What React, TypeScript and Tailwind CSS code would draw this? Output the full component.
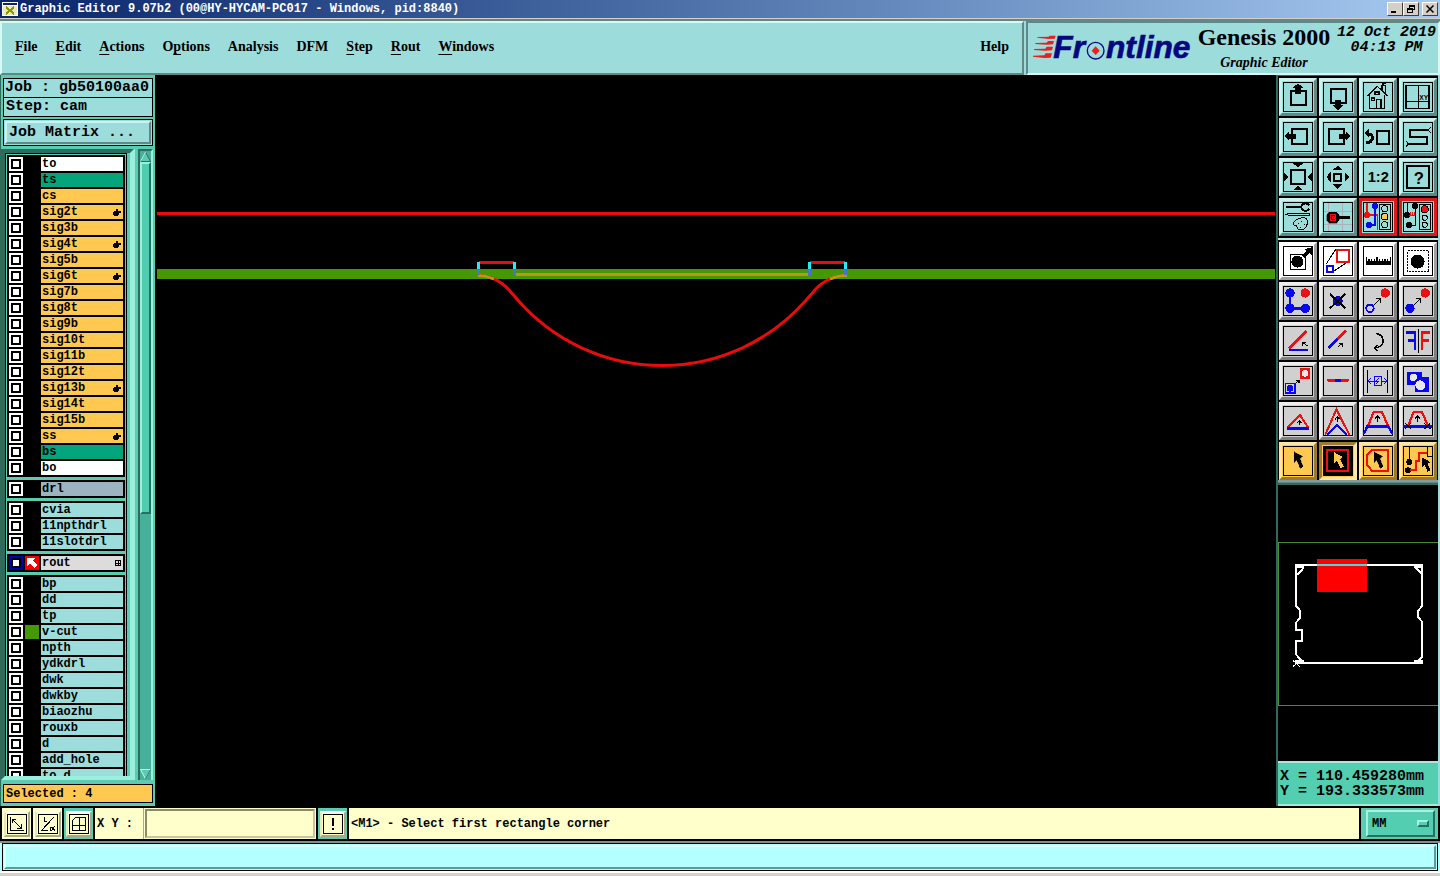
import type { ReactNode } from "react";

const MONO = "font-['Liberation_Mono',monospace] font-bold";
const SERIF = "font-['Liberation_Serif',serif] font-bold";

/* ---------- Title bar ---------- */

function WindowButton({ label, children }: { label: string; children: ReactNode }) {
  return (
    <button
      aria-label={label}
      className="flex h-[14px] w-4 items-center justify-center border border-t-white border-r-[#404040] border-b-[#404040] border-l-white bg-[#d4d0c8]"
    >
      <svg viewBox="0 0 12 10" className="h-[10px] w-3" shapeRendering="crispEdges" fill="none" stroke="#000">
        {children}
      </svg>
    </button>
  );
}

function TitleBar() {
  return (
    <div className="flex h-[18px] shrink-0 items-center bg-linear-to-r from-[#0a246a] to-[#a6caf0] pr-[2px] pl-[2px]">
      <svg viewBox="0 0 16 16" className="h-4 w-4" shapeRendering="crispEdges">
        <rect x="0" y="1" width="16" height="14" fill="#fff" />
        <rect x="1" y="2" width="14" height="2" fill="#10206a" />
        <rect x="1" y="5" width="14" height="9" fill="#ece9c0" />
        <path d="M4 6l8 7M12 6l-8 7" stroke="#8a9a00" strokeWidth="2" />
      </svg>
      <h1 className={`${MONO} ml-[2px] flex-1 text-[12px] leading-[18px] whitespace-pre text-white`}>
        Graphic Editor 9.07b2 (00@HY-HYCAM-PC017 - Windows, pid:8840)
      </h1>
      <WindowButton label="Minimize">
        <path d="M2 8h5" strokeWidth="2" />
      </WindowButton>
      <WindowButton label="Restore">
        <path d="M4 1h6M4 2h6M4.500 1v3M9.500 1v5M7 5.500h3M2 4.500h6M2 5h6M2.500 4v5M7.500 4v5M2 8.500h6" />
      </WindowButton>
      <div className="w-[3px]" />
      <WindowButton label="Close">
        <path d="M2.500 1.500l7 7M9.500 1.500l-7 7" strokeWidth="1.500" shapeRendering="auto" />
      </WindowButton>
    </div>
  );
}

/* ---------- Header ---------- */

const MENUS: [string, string, string][] = [
  ["", "F", "ile"],
  ["", "E", "dit"],
  ["", "A", "ctions"],
  ["O", "p", "tions"],
  ["Analysis", "", ""],
  ["DFM", "", ""],
  ["", "S", "tep"],
  ["", "R", "out"],
  ["", "W", "indows"],
];

function FrontlineLogo() {
  return (
    <svg viewBox="216 90 483 96" className="h-8 w-[161px] overflow-visible" role="img" aria-label="Frontline">
      <g fill="#f01c1c">
        <path d="M232 108l34-1 3-3h18l-3 9-18 1-34-4z" />
        <path d="M226 126l34-1 4-5h18l-3 10-19 1-34-2z" />
        <path d="M222 144l34-1 4-6h19l-3 11-20 1-34-2z" />
        <path d="M219 164l34-1 4-6h19l-4 13-19 1-34-4z" />
      </g>
      <g
        fill="#07077f"
        stroke="#07077f"
        strokeWidth="2"
        fontFamily="'Liberation Sans', sans-serif"
        fontSize="95"
        fontWeight="700"
        fontStyle="italic"
      >
        <text x="280" y="172">Fr</text>
        <text x="438" y="172">ntline</text>
      </g>
      <circle cx="407" cy="149" r="25" fill="none" stroke="#07077f" strokeWidth="4" />
      <path d="M407 136l12 13-12 13-12-13z" fill="#f01c1c" />
    </svg>
  );
}

function Header() {
  return (
    <header className="flex h-14 shrink-0 border-t-2 border-t-[#5f8886] bg-[#9cdcdb]">
      <nav className="flex flex-1 items-center border-2 border-t-[#d8f8f4] border-r-[#5f8886] border-b-[#5f8886] border-l-[#d8f8f4] px-[13px] pb-[2px]">
        <ul className={`${SERIF} flex gap-[18px] text-[14px] leading-5 text-black`}>
          {MENUS.map(([pre, key, post]) => (
            <li key={pre + key + post}>
              <button>
                {pre}
                <span className="underline decoration-1 underline-offset-[3px]">{key}</span>
                {post}
              </button>
            </li>
          ))}
        </ul>
        <button className={`${SERIF} ml-auto text-[14px] leading-5`}>Help</button>
      </nav>
      <div className="ml-[2px] flex w-[414px] items-start border-2 border-t-[#5f8886] border-r-[#d8f8f4] border-b-[#d8f8f4] border-l-[#5f8886] pl-1">
        <div className="pt-2">
          <FrontlineLogo />
        </div>
        <div className={`${SERIF} ml-[3px] w-[136px] text-center text-black`}>
          <div className="text-[24px] leading-7 whitespace-nowrap">Genesis 2000</div>
          <div className="text-[14px] leading-6 italic">Graphic Editor</div>
        </div>
        <div className={`${MONO} ml-[5px] pt-[2px] text-center text-[15px] leading-[15px] whitespace-nowrap text-black italic`}>
          <div>12 Oct 2019</div>
          <div>04:13 PM</div>
        </div>
      </div>
    </header>
  );
}

/* ---------- Layer list ---------- */

type Layer = { name: string; bg: string; hand?: boolean; swatch?: "green" | "active" };

const W = "bg-white";
const G = "bg-[#04a57c]";
const O = "bg-[#ffc850]";
const T = "bg-[#9cdcdb]";

const GROUPS: Layer[][] = [
  [
    { name: "to", bg: W },
    { name: "ts", bg: G },
    { name: "cs", bg: O },
    { name: "sig2t", bg: O, hand: true },
    { name: "sig3b", bg: O },
    { name: "sig4t", bg: O, hand: true },
    { name: "sig5b", bg: O },
    { name: "sig6t", bg: O, hand: true },
    { name: "sig7b", bg: O },
    { name: "sig8t", bg: O },
    { name: "sig9b", bg: O },
    { name: "sig10t", bg: O },
    { name: "sig11b", bg: O },
    { name: "sig12t", bg: O },
    { name: "sig13b", bg: O, hand: true },
    { name: "sig14t", bg: O },
    { name: "sig15b", bg: O },
    { name: "ss", bg: O, hand: true },
    { name: "bs", bg: G },
    { name: "bo", bg: W },
  ],
  [{ name: "drl", bg: "bg-[#9cb4bf]" }],
  [
    { name: "cvia", bg: T },
    { name: "11npthdrl", bg: T },
    { name: "11slotdrl", bg: T },
  ],
  [{ name: "rout", bg: "bg-[#dcdcdc]", swatch: "active" }],
  [
    { name: "bp", bg: T },
    { name: "dd", bg: T },
    { name: "tp", bg: T },
    { name: "v-cut", bg: T, swatch: "green" },
    { name: "npth", bg: T },
    { name: "ydkdrl", bg: T },
    { name: "dwk", bg: T },
    { name: "dwkby", bg: T },
    { name: "biaozhu", bg: T },
    { name: "rouxb", bg: T },
    { name: "d", bg: T },
    { name: "add_hole", bg: T },
    { name: "to_d", bg: T },
  ],
];

function LayerRow({ layer }: { layer: Layer }) {
  const active = layer.swatch === "active";
  const id = `layer-${layer.name}`;
  return (
    <li className="flex h-[14px] gap-[2px]">
      <span className={`flex h-[14px] w-[14px] items-center justify-center ${active ? "bg-[#0000b4]" : "bg-white"}`}>
        <input
          id={id}
          type="checkbox"
          defaultChecked={active}
          className="h-[10px] w-[10px] appearance-none border-2 border-black bg-white"
        />
      </span>
      <span
        className={`flex h-[14px] w-[14px] items-center justify-center ${
          active ? "bg-[#f80000]" : layer.swatch === "green" ? "bg-[#449800]" : "bg-black"
        }`}
      >
        {active && (
          <svg viewBox="0 0 14 14" className="h-[14px] w-[14px]" shapeRendering="crispEdges">
            <path d="M2 2h8l-2 3 4 4-3 3-4-4-3 2z" fill="#fff" />
          </svg>
        )}
      </span>
      <label
        htmlFor={id}
        className={`${MONO} flex min-w-0 flex-1 items-center pr-[2px] pl-[1px] text-[12px] leading-[14px] text-black ${layer.bg}`}
      >
        {layer.name}
        {layer.hand && (
          <svg viewBox="0 0 8 8" className="ml-auto h-2 w-2" shapeRendering="crispEdges">
            <path d="M0 4h1V3h2V1h2v2h3v2H6v2H5v1H1V7H0z" />
          </svg>
        )}
        {active && (
          <svg viewBox="0 0 6 6" className="ml-auto h-[6px] w-[6px]" shapeRendering="crispEdges">
            <path d="M.5.5h5v5h-5zM3.500 0v6M0 3.500h6" fill="none" stroke="#000" />
          </svg>
        )}
      </label>
    </li>
  );
}

function LayerPanel() {
  return (
    <aside className={`${MONO} flex w-[156px] shrink-0 flex-col border-r border-l border-r-black border-l-[#2f6b5c] bg-[#5bcbb1] text-black`}>
      <div className="mx-[2px] mt-[3px] border border-black bg-[#9cdcdb] text-[15px] leading-[18px] whitespace-pre">
        <div className="h-[19px] border-b border-black pl-[1px]">Job : gb50100aa0</div>
        <div className="h-[18px] pl-[2px]">Step: cam</div>
      </div>
      <div className="mx-[2px] mt-[2px] h-[27px] border border-black bg-[#9cdcdb] p-[1px]">
        <button className="block h-full w-full border-2 border-t-[#c8f4f0] border-r-[#5f8886] border-b-[#5f8886] border-l-[#c8f4f0] pl-[2px] text-left text-[15px] leading-[18px] whitespace-pre">
          Job Matrix ...
        </button>
      </div>
      <div className="mt-[3px] flex min-h-0 flex-1">
        <div className="min-w-0 flex-1 overflow-hidden border-4 border-t-[#2f6b5c] border-r-[#9cefdc] border-b-[#9cefdc] border-l-[#2f6b5c]">
          <div className="mr-[3px] h-full overflow-hidden border-x border-t border-black px-[1px] pt-[1px]">
            <div className="flex flex-col gap-[3px]">
              {GROUPS.map((group, i) => (
                <ul key={i} className="flex flex-col gap-[2px] bg-black p-[2px]">
                  {group.map((layer) => (
                    <LayerRow key={layer.name} layer={layer} />
                  ))}
                </ul>
              ))}
            </div>
          </div>
        </div>
        <div className="w-1 border-l border-[#9cefdc] bg-[#5bcbb1]" />
        <div className="flex w-[15px] flex-col border-t-2 border-r-2 border-l-2 border-t-[#2f6b5c] border-r-[#9cefdc] border-l-[#2f6b5c] bg-[#46b09b]">
          <button aria-label="Scroll up">
            <svg viewBox="0 0 11 11" className="h-[11px] w-[11px]" fill="none">
              <path d="M5.500 1l5 9.500h-10z" fill="#5bcbb1" stroke="#2f6b5c" />
              <path d="M5.500 1l-5 9.500" stroke="#b8ffee" />
            </svg>
          </button>
          <div className="h-[352px] border-2 border-t-[#9cefdc] border-r-[#24715f] border-b-[#24715f] border-l-[#9cefdc] bg-[#50cdb0]" />
          <button aria-label="Scroll down" className="mt-auto">
            <svg viewBox="0 0 11 11" className="h-[11px] w-[11px]" fill="none">
              <path d="M5.500 10l5-9.500h-10z" fill="#5bcbb1" stroke="#b8ffee" />
              <path d="M5.500 10l5-9.500" stroke="#2f6b5c" />
            </svg>
          </button>
        </div>
        <div className="w-[2px]" />
      </div>
      <div className="mx-[2px] mt-1 mb-[3px] h-[19px] border border-black bg-[#ffc850] pl-[2px] text-[12px] leading-[18px]">
        Selected : 4
      </div>
    </aside>
  );
}

/* ---------- Drawing canvas ---------- */

function Canvas() {
  return (
    <main className="min-h-0 min-w-0 flex-1 overflow-hidden bg-black">
      <svg
        viewBox="156 75 1120 731"
        preserveAspectRatio="xMinYMin slice"
        className="h-full w-full"
        fill="none"
        strokeWidth="3"
        aria-label="Board drawing"
      >
        <rect x="157" y="269" width="1118" height="10" fill="#449800" />
        <path d="M157 213.500H1275" stroke="#e80c0c" />
        <path d="M478 275.500C492 276 501 281 509 290L520 302.500A191.500 191.500 0 0 0 804 302.500L815 290C823 281 832 276 846 275.500" stroke="#e80c0c" />
        <path d="M516 274.500H808M478 275.500Q486 275.500 494 279M830 279Q838 275.500 847 275.500" stroke="#b89a10" />
        <path d="M479 262.500H514M810 262.500H845" stroke="#e80c0c" />
        <path d="M478.500 262v7M514.500 262v7M809.500 262v7M845.500 262v7" stroke="#28e8f0" />
        <path d="M478.500 269v6M514.500 269v6M809.500 269v6M845.500 269v6" stroke="#4a74c8" />
      </svg>
    </main>
  );
}

/* ---------- Tool palette ---------- */

type Skin = "teal" | "alert" | "white" | "gray" | "amber" | "pressed";

const SKINS: Record<Skin, string> = {
  teal: "bg-[#9cdcdb] border-t-[#c8f4f0] border-l-[#c8f4f0] border-r-[#5f8886] border-b-[#5f8886]",
  alert: "bg-[#9cdcdb] border-[#e01818]",
  white: "bg-white border-t-white border-l-white border-r-[#a0a0a0] border-b-[#a0a0a0]",
  gray: "bg-[#d0d0d0] border-t-[#eeeeee] border-l-[#eeeeee] border-r-[#808080] border-b-[#808080]",
  amber: "bg-[#ffc850] border-t-[#ffe6a8] border-l-[#ffe6a8] border-r-[#9c7830] border-b-[#9c7830]",
  pressed: "bg-[#ffc850] border-t-[#9c7830] border-l-[#9c7830] border-r-[#ffe6a8] border-b-[#ffe6a8]",
};

const RED = "#ee1010";
const BLUE = "#0808f0";

type Tool = { label: string; skin: Skin; icon: ReactNode };

const cursor = (x: number, y: number) => (
  <path d={`M${x} ${y}l26 15-9 6 11 23-9 6-11-24-8 7z`} fill="#000" />
);

const VIEW_TOOLS: Tool[] = [
  {
    label: "Pan up",
    skin: "teal",
    icon: (
      <>
        <rect x="24" y="27" width="45" height="42" strokeWidth="6" />
        <path d="M45 4l16 13h-6v20H36V17h-7z" fill="#000" stroke="none" />
      </>
    ),
  },
  {
    label: "Pan down",
    skin: "teal",
    icon: (
      <>
        <rect x="24" y="21" width="45" height="42" strokeWidth="6" />
        <path d="M45 84l16-14h-6V55H36v15h-7z" fill="#000" stroke="none" />
      </>
    ),
  },
  {
    label: "Home view",
    skin: "teal",
    icon: (
      <path
        d="M14 42L43 13l30 29M20 38v41h45V38M41 79V53h13v26M26 48h8v8h-8zM36 30h12v8H36zM57 24V10h10v24M57 7l12-4"
        strokeWidth="4"
      />
    ),
  },
  {
    label: "XY view",
    skin: "teal",
    icon: (
      <>
        <rect x="9" y="10" width="70" height="69" strokeWidth="5" />
        <path d="M45 10v69M9 58h70" strokeWidth="3" />
        <text x="49" y="54" fontSize="20" fontWeight="700" fontFamily="Liberation Sans, sans-serif" fill="#000" stroke="none">
          XY
        </text>
      </>
    ),
  },
  {
    label: "Pan left",
    skin: "teal",
    icon: (
      <>
        <rect x="27" y="21" width="45" height="45" strokeWidth="6" />
        <path d="M5 42l14-14v7h20v15H19v7z" fill="#000" stroke="none" />
      </>
    ),
  },
  {
    label: "Pan right",
    skin: "teal",
    icon: (
      <>
        <rect x="18" y="21" width="45" height="45" strokeWidth="6" />
        <path d="M83 42L69 28v7H49v15h20v7z" fill="#000" stroke="none" />
      </>
    ),
  },
  {
    label: "Previous view",
    skin: "teal",
    icon: (
      <>
        <rect x="42" y="27" width="36" height="39" strokeWidth="6" />
        <path d="M10 61h8c9-3 12-12 9-20l-9-7" strokeWidth="9" />
        <path d="M4 33l14-12v24z" fill="#000" stroke="none" />
      </>
    ),
  },
  {
    label: "Serpentine view",
    skin: "teal",
    icon: (
      <>
        <path d="M76 24H21v21h51v21H16" strokeWidth="6" />
        <path d="M76 24l7-9M76 24l7 8M16 66l-7-9M16 66l-7 8" strokeWidth="3" />
      </>
    ),
  },
  {
    label: "Zoom out",
    skin: "teal",
    icon: (
      <>
        <rect x="24" y="24" width="42" height="42" strokeWidth="6" />
        <path d="M29 4h31L45 16zM29 85h31L45 72zM2 29v31l13-15zM88 29v31L75 45z" fill="#000" stroke="none" />
      </>
    ),
  },
  {
    label: "Zoom in",
    skin: "teal",
    icon: (
      <>
        <rect x="33" y="36" width="21" height="21" strokeWidth="6" />
        <path d="M28 25h31L44 11zM28 66h31L44 80zM23 29v31L10 45zM65 29v31l13-15z" fill="#000" stroke="none" />
      </>
    ),
  },
  {
    label: "Scale one to two",
    skin: "teal",
    icon: (
      <text x="14" y="60" fontSize="44" fontWeight="700" fontFamily="Liberation Sans, sans-serif" fill="#000" stroke="none">
        1:2
      </text>
    ),
  },
  {
    label: "Query",
    skin: "teal",
    icon: (
      <>
        <rect x="12" y="12" width="66" height="66" strokeWidth="6" />
        <text x="32" y="65" fontSize="50" fontWeight="700" fontFamily="Liberation Sans, sans-serif" fill="#000" stroke="none">
          ?
        </text>
      </>
    ),
  },
  {
    label: "Setup",
    skin: "teal",
    icon: (
      <>
        <path d="M9 15h46" strokeWidth="6" />
        <path d="M79 10a13 11 0 1 0 0 11" strokeWidth="6" />
        <path d="M8 37l13-4h57v8H21z" strokeWidth="3" />
        <path d="M66 48c-14-3-34 6-36 18 4 8 12 0 12 8s10 14 22 6 12-28 2-32zM55 56v3M46 62v3M63 65v3M52 75v3" strokeWidth="3" />
      </>
    ),
  },
  {
    label: "Probe",
    skin: "teal",
    icon: (
      <>
        <path d="M15 3v84M57 3v84M3 27h84M3 66h84" stroke="#b0b0b8" strokeWidth="3" />
        <path d="M18 31h23l7 8v16l-7 8H18l-7-8V39z" fill="#000" />
        <path d="M46 47h36" strokeWidth="10" />
        <rect x="21" y="38" width="17" height="18" stroke={RED} strokeWidth="3" />
        <rect x="27" y="44" width="6" height="6" stroke={RED} strokeWidth="3" />
      </>
    ),
  },
  {
    label: "Online check",
    skin: "alert",
    icon: (
      <>
        <path d="M12 2v37h32v45" stroke={RED} strokeWidth="4" />
        <circle cx="12" cy="39" r="9" fill={RED} stroke="none" />
        <path d="M36 12v57H18" stroke={BLUE} strokeWidth="4" />
        <circle cx="36" cy="12" r="9" fill={BLUE} stroke="none" />
        <circle cx="18" cy="69" r="9" fill={BLUE} stroke="none" />
        <rect x="49" y="6" width="32" height="77" strokeWidth="3" />
        <circle cx="65" cy="20" r="9" strokeWidth="3" />
        <circle cx="65" cy="44" r="10" fill="#ffc850" strokeWidth="3" />
        <circle cx="65" cy="68" r="9" strokeWidth="3" />
      </>
    ),
  },
  {
    label: "Stop check",
    skin: "alert",
    icon: (
      <>
        <path d="M12 2v38M36 12v57H18" strokeWidth="3" />
        <circle cx="12" cy="39" r="9" fill="#000" stroke="none" />
        <circle cx="36" cy="12" r="9" fill="#000" stroke="none" />
        <circle cx="18" cy="69" r="9" fill="#000" stroke="none" />
        <path d="M18 40h17M21 29v11M27 29v11M33 29v11" stroke={RED} strokeWidth="3" />
        <rect x="49" y="6" width="32" height="77" strokeWidth="3" />
        <circle cx="65" cy="22" r="11" fill={RED} strokeWidth="3" />
        <circle cx="65" cy="47" r="8" strokeWidth="3" />
        <circle cx="65" cy="68" r="8" strokeWidth="3" />
      </>
    ),
  },
];

const EDIT_TOOLS: Tool[] = [
  {
    label: "Pad",
    skin: "white",
    icon: (
      <>
        <rect x="21" y="25" width="45" height="45" strokeWidth="3" />
        <circle cx="43" cy="47" r="18" fill="#000" stroke="none" />
        <path d="M57 29l13-13-6-6 23-6v24l-7-6-15 15z" fill="#000" stroke="none" />
      </>
    ),
  },
  {
    label: "Resize",
    skin: "white",
    icon: (
      <>
        <path d="M10 54L38 10M31 76l46-30" strokeWidth="3" />
        <rect x="42" y="12" width="36" height="36" stroke={RED} strokeWidth="6" />
        <rect x="12" y="60" width="18" height="18" stroke={BLUE} strokeWidth="6" />
      </>
    ),
  },
  {
    label: "Measure",
    skin: "white",
    icon: (
      <>
        <path d="M8 50h76" strokeWidth="12" />
        <path d="M10 32v14M18 38v10M26 38v10M34 38v10M42 32v14M50 38v10M58 38v10M66 38v10M74 38v10M82 32v14" strokeWidth="4" />
      </>
    ),
  },
  {
    label: "Select pad",
    skin: "white",
    icon: (
      <>
        <rect x="13.500" y="13.500" width="63" height="63" strokeWidth="3" strokeDasharray="6 3" />
        <circle cx="44" cy="47" r="21" fill="#000" stroke="none" />
      </>
    ),
  },
  {
    label: "Add net",
    skin: "gray",
    icon: (
      <>
        <path d="M21 21v46h46" stroke={BLUE} strokeWidth="8" />
        <circle cx="21" cy="21" r="14" fill={BLUE} stroke="none" />
        <circle cx="21" cy="67" r="14" fill={BLUE} stroke="none" />
        <circle cx="67" cy="67" r="14" fill={BLUE} stroke="none" />
        <circle cx="67" cy="21" r="14" fill={RED} stroke="none" />
      </>
    ),
  },
  {
    label: "Delete",
    skin: "gray",
    icon: (
      <>
        <circle cx="44" cy="45" r="15" fill="#0808b8" stroke="none" />
        <path d="M21 24l46 43M67 24L21 67" strokeWidth="6" />
      </>
    ),
  },
  {
    label: "Copy",
    skin: "gray",
    icon: (
      <>
        <circle cx="67" cy="21" r="14" fill={RED} stroke="none" />
        <circle cx="21" cy="67" r="11" stroke={BLUE} strokeWidth="6" />
        <path d="M34 56l18-18M40 38h12v12" strokeWidth="3" />
      </>
    ),
  },
  {
    label: "Move",
    skin: "gray",
    icon: (
      <>
        <circle cx="67" cy="21" r="14" fill={RED} stroke="none" />
        <circle cx="21" cy="67" r="14" fill={BLUE} stroke="none" />
        <path d="M34 56l18-18M40 38h12v12" strokeWidth="3" />
      </>
    ),
  },
  {
    label: "Change angle",
    skin: "gray",
    icon: (
      <>
        <path d="M18 67L70 15" stroke={RED} strokeWidth="8" />
        <path d="M19 72h56" stroke={BLUE} strokeWidth="8" />
        <path d="M73 60L58 48M58 60V48h12" strokeWidth="3" />
      </>
    ),
  },
  {
    label: "Extend line",
    skin: "gray",
    icon: (
      <>
        <path d="M69 14L43 40" stroke={RED} strokeWidth="8" />
        <path d="M43 40L16 67" stroke={BLUE} strokeWidth="8" />
        <path d="M46 62l13-11M48 51h11v12" strokeWidth="3" />
      </>
    ),
  },
  {
    label: "Rotate",
    skin: "gray",
    icon: (
      <>
        <path d="M38 22c18 2 22 14 22 24S50 66 34 66" strokeWidth="5" />
        <path d="M44 57L33 66l11 10" strokeWidth="4" />
      </>
    ),
  },
  {
    label: "Mirror",
    skin: "gray",
    icon: (
      <>
        <path d="M9 20h27v52M36 43H14" stroke={BLUE} strokeWidth="8" />
        <path d="M82 20H57v52M57 43h22" stroke={RED} strokeWidth="8" />
        <path d="M46 8v72" strokeWidth="3" />
      </>
    ),
  },
  {
    label: "Substitute",
    skin: "gray",
    icon: (
      <>
        <rect x="50" y="6" width="32" height="32" fill={RED} stroke="none" />
        <circle cx="66" cy="22" r="10" fill="#e8e8e8" stroke="none" />
        <rect x="7" y="52" width="29" height="29" stroke={BLUE} strokeWidth="4" />
        <circle cx="21" cy="67" r="10" fill={BLUE} stroke="none" />
        <path d="M38 52l9-9M40 43h8v8" strokeWidth="4" />
      </>
    ),
  },
  {
    label: "Break line",
    skin: "gray",
    icon: (
      <>
        <path d="M15 43h60" stroke={RED} strokeWidth="8" strokeLinecap="round" />
        <path d="M35 43h18" stroke={BLUE} strokeWidth="8" />
      </>
    ),
  },
  {
    label: "Spacing",
    skin: "gray",
    icon: (
      <>
        <path d="M12 12v68M74 12v68" strokeWidth="3" />
        <path d="M15 45h18M55 45h17M24 36l-9 9 9 9M63 36l9 9-9 9M33 31h21v27H33zM47 36l-8 9h9l-8 9" stroke={BLUE} strokeWidth="3" />
      </>
    ),
  },
  {
    label: "Merge",
    skin: "gray",
    icon: (
      <>
        <path d="M11 19h45v15h21v43H35V57H11z" fill={BLUE} stroke="none" />
        <circle cx="31" cy="34" r="11" fill="#e8e8e8" stroke="none" />
        <circle cx="52" cy="58" r="15" fill="#e8e8e8" stroke="none" />
      </>
    ),
  },
  {
    label: "Stretch triangle",
    skin: "gray",
    icon: (
      <>
        <path d="M14 65l37-38 25 38" stroke={RED} strokeWidth="6" />
        <path d="M12 67h66" stroke={BLUE} strokeWidth="7" />
        <path d="M49 57V45M42 51l7-7 7 7" strokeWidth="3" />
      </>
    ),
  },
  {
    label: "Stretch corner",
    skin: "gray",
    icon: (
      <>
        <path d="M7 86L40 10l39 76" stroke={RED} strokeWidth="6" />
        <path d="M12 86l29-29 31 29" stroke={BLUE} strokeWidth="6" />
        <path d="M43 47V33M36 40l7-8 7 8" strokeWidth="3" />
      </>
    ),
  },
  {
    label: "Stretch trapezoid",
    skin: "gray",
    icon: (
      <>
        <path d="M15 60l17-42h25l18 42" stroke={RED} strokeWidth="7" />
        <path d="M2 84l11-23h63l12 23" stroke={BLUE} strokeWidth="7" />
        <path d="M43 48V30M35 38l8-8 8 8" strokeWidth="4" />
      </>
    ),
  },
  {
    label: "Stretch between",
    skin: "gray",
    icon: (
      <>
        <path d="M15 60l17-42h25l18 42" stroke={RED} strokeWidth="7" />
        <path d="M1 61h86" stroke={BLUE} strokeWidth="7" />
        <path d="M43 48V30M35 38l8-8 8 8M6 52l18 17M24 52L6 69M64 52l18 17M82 52L64 69" strokeWidth="3" />
      </>
    ),
  },
  { label: "Select feature", skin: "amber", icon: cursor(33, 17) },
  {
    label: "Select in rectangle",
    skin: "pressed",
    icon: (
      <>
        <rect x="3" y="3" width="84" height="84" fill="#000" />
        <rect x="13" y="13" width="63" height="63" stroke={RED} strokeWidth="6" />
        <path d="M32 18l28 15-9 6 11 23-9 6-11-24-10 9z" fill="#ffc850" stroke="none" />
      </>
    ),
  },
  {
    label: "Select in polygon",
    skin: "amber",
    icon: (
      <>
        <path d="M27 12h48v63H27L13 57V27z" stroke={RED} strokeWidth="6" />
        {cursor(33, 17)}
      </>
    ),
  },
  {
    label: "Select net",
    skin: "amber",
    icon: (
      <>
        <path d="M19 2v44M73 2v30h16" strokeWidth="3" />
        <circle cx="19" cy="48" r="9" fill="#000" stroke="none" />
        <circle cx="15" cy="73" r="9" fill="#000" stroke="none" />
        <path d="M21 72h18V45h9V21h25" stroke={RED} strokeWidth="6" />
        <path d="M57 34l25 14-8 6 9 18-9 6-9-20-8 7z" fill="#000" stroke="none" />
      </>
    ),
  },
];

function ToolGrid({ tools }: { tools: Tool[] }) {
  return (
    <div className="grid grid-cols-[repeat(4,38px)] gap-[2px] bg-black">
      {tools.map((t) => (
        <button
          key={t.label}
          aria-label={t.label}
          className={`flex h-[38px] w-[38px] items-center justify-center border-[3px] ${SKINS[t.skin]}`}
        >
          <svg
            viewBox="0 0 90 90"
            className="h-[30px] w-[30px]"
            shapeRendering="crispEdges"
            fill="none"
            stroke="#000"
          >
            <rect x="1.500" y="1.500" width="87" height="87" strokeWidth="3" />
            {t.icon}
          </svg>
        </button>
      ))}
    </div>
  );
}

function Overview() {
  return (
    <svg
      viewBox="12 -150 480 828"
      preserveAspectRatio="xMidYMin slice"
      className="min-h-0 w-full flex-1 bg-black"
      shapeRendering="crispEdges"
      fill="none"
      aria-label="Board overview"
    >
      <rect x="13.500" y="22.500" width="483" height="489" stroke="#4c8c30" strokeWidth="3" />
      <rect x="129" y="72" width="150" height="99" fill="#ff0000" />
      <g stroke="#fff" strokeWidth="6">
        <path d="M63 90h384M63 384h384" />
        <path d="M66 90v28h6l16-19M66 116v96l12 15v22l-12 14v22h18v32H66v41l18 21M444 90v26l-18-18M444 114v99l-12 15v18l12 14v106l-16 14" />
        <path d="M63 96h27M420 96h27M63 378h27M420 378h27" />
      </g>
      <path d="M57 376l20 19M77 376l-20 19" stroke="#fff" strokeWidth="3" />
      <path d="M129 90h150" stroke="#40dce0" strokeWidth="6" />
    </svg>
  );
}

function ToolPanel() {
  return (
    <aside className="flex w-[164px] shrink-0 flex-col border-r-2 border-l-2 border-r-[#9cdcdb] border-l-[#2f6b5c] bg-black">
      <div className="border-t border-[#2f6b5c] bg-black pt-[2px] pb-[2px] pl-[1px]">
        <ToolGrid tools={VIEW_TOOLS} />
      </div>
      <div className="border-t-2 border-[#b8f0e4] bg-black pt-[2px] pl-[1px]">
        <ToolGrid tools={EDIT_TOOLS} />
      </div>
      <div className="h-[5px] border-y-2 border-t-[#8a9a98] border-b-[#2f6b5c] bg-[#5f8886]" />
      <Overview />
      <div className={`${MONO} h-[45px] border-t-2 border-b-2 border-[#a8e8dc] bg-[#54ceb0] pt-[6px] pl-[2px] text-[15px] leading-[15px] whitespace-pre text-black`}>
        <div>X = 110.459280mm</div>
        <div>Y = 193.333573mm</div>
      </div>
    </aside>
  );
}

/* ---------- Status line ---------- */

function SnapButton({ label, active, children }: { label: string; active?: boolean; children: ReactNode }) {
  return (
    <button
      aria-label={label}
      className={`flex h-[31px] w-[29px] shrink-0 items-center justify-center ${active ? "bg-[#5bcbb1]" : "bg-[#ffffcc]"}`}
    >
      <span className="flex border-2 border-t-[#ffffee] border-r-[#a8a888] border-b-[#a8a888] border-l-[#e8e8b8] bg-[#ffffcc] p-[1px]">
        <svg viewBox="0 0 20 20" className="h-5 w-5" fill="none" stroke="#000" shapeRendering="crispEdges">
          <rect x=".5" y=".5" width="19" height="19" />
          {children}
        </svg>
      </span>
    </button>
  );
}

function StatusBar() {
  return (
    <footer className={`${MONO} shrink-0 text-[12px] text-black`}>
      <div className="flex h-[35px] gap-[2px] bg-black p-[2px]">
        <SnapButton label="Snap diagonal">
          <path d="M3.500 3v14M3 16.500h14M5 5l9 9M5 9V5h4M10 14h4v-4" />
        </SnapButton>
        <SnapButton label="Snap angle">
          <path d="M3 17L16 3M6.500 3v5M6 7.500h3M3 16.500h7M12 13h2l3 4M12 16h2l3-4M12 13v3" />
        </SnapButton>
        <SnapButton label="Snap grid" active>
          <path d="M3.500 7v10M16.500 3v14M10.500 3v14M3 11.500h14M3 16.500h14M7 3.500h10M3 7l4-4" />
        </SnapButton>
        <div className="flex min-w-0 items-center bg-[#ffffcc] pl-[2px]">
          <label htmlFor="xy" className="w-[46px] whitespace-pre">
            X Y :
          </label>
          <div className="flex h-full border-l border-[#5bcbb1] p-[1px]">
            <input
              id="xy"
              className="w-[170px] border-2 border-t-[#8c8c6c] border-r-[#c8c8a0] border-b-[#c8c8a0] border-l-[#8c8c6c] bg-[#ffffcc] px-1 outline-none"
            />
          </div>
        </div>
        <SnapButton label="Alert" active>
          <path d="M10 4v8M10 14v2" strokeWidth="2" />
        </SnapButton>
        <output className="flex flex-1 items-center bg-[#ffffcc] pl-[2px] whitespace-pre">
          {"<M1> - Select first rectangle corner"}
        </output>
        <div className="w-[77px] bg-[#5bcbb1] py-[2px] pr-[3px] pl-[5px]">
          <div className="relative h-full border-2 border-t-[#a8f0e0] border-r-[#24715f] border-b-[#24715f] border-l-[#a8f0e0]">
            <select aria-label="Units" defaultValue="MM" className="h-full w-full appearance-none bg-[#54ceb0] pl-1">
              <option>MM</option>
              <option>INCH</option>
            </select>
            <span className="pointer-events-none absolute top-2 right-1 h-[7px] w-3 border-2 border-t-[#a8f0e0] border-r-[#24715f] border-b-[#24715f] border-l-[#a8f0e0]" />
          </div>
        </div>
      </div>
      <div className="border-t-2 border-[#7d8f8e] bg-[#b4ffff] px-[2px]">
        <div className="h-[28px] border border-black p-[1px]">
          <input
            aria-label="Command line"
            className="block h-full w-full border-2 border-t-[#dcffff] border-r-[#5f9a9a] border-b-[#5f9a9a] border-l-[#dcffff] bg-[#b4ffff] px-1 outline-none"
          />
        </div>
      </div>
      <div className="h-[5px] border-t-2 border-white bg-[#d6d2ca]" />
    </footer>
  );
}

export default function App() {
  return (
    <div className="flex h-screen flex-col overflow-hidden bg-[#d4d0c8]">
      <TitleBar />
      <div className="h-px shrink-0 bg-[#d4d0c8]" />
      <Header />
      <div className="flex min-h-0 flex-1 bg-black">
        <LayerPanel />
        <Canvas />
        <ToolPanel />
      </div>
      <StatusBar />
    </div>
  );
}
